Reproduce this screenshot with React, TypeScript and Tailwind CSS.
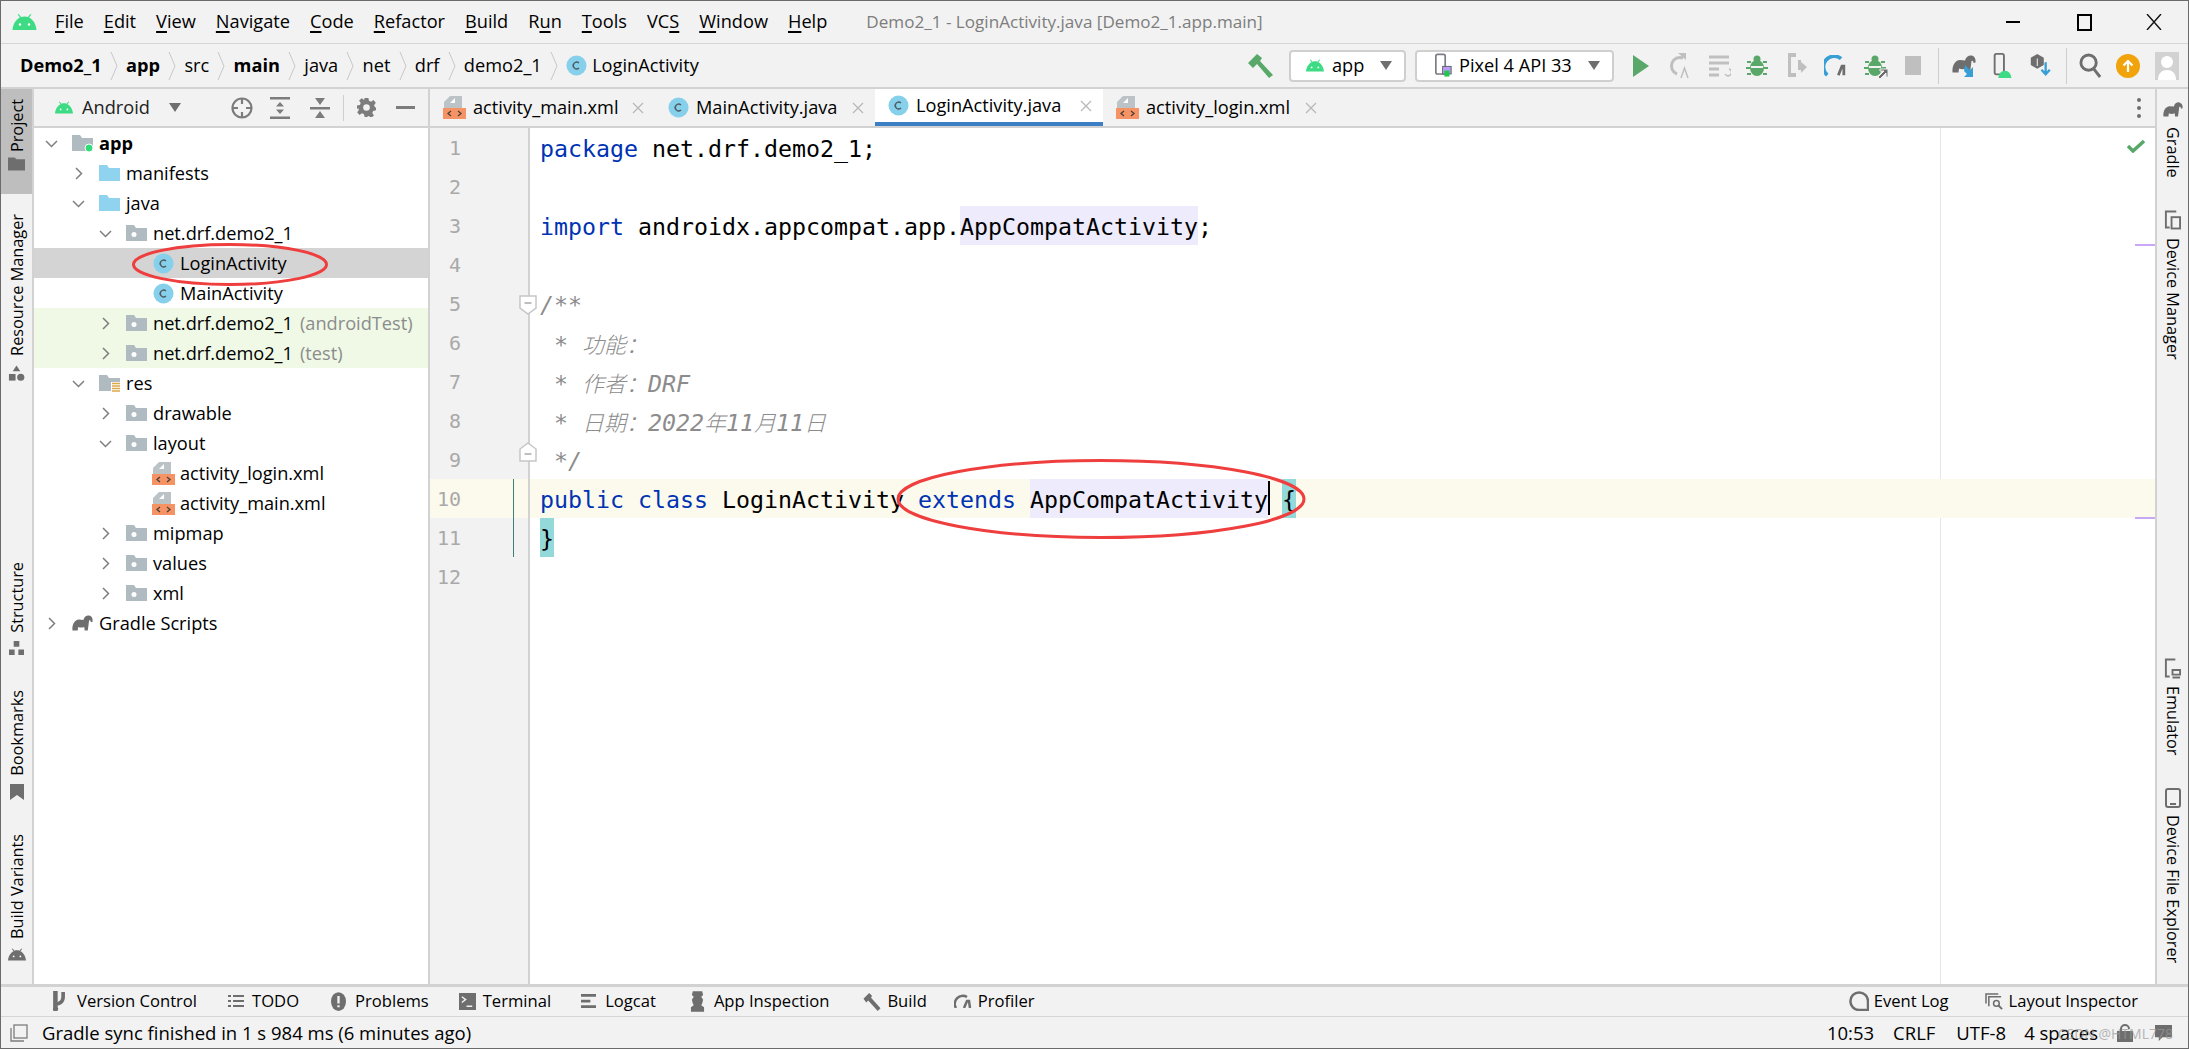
import React from "react";

type P = { className?: string };
const Android = ({ className = "w-[18px] h-[13px] text-[#3ddc84]" }: P) => (
  <svg viewBox="0 0 24 16" className={className} fill="currentColor">
    <path d="M0 16C0.6 9.5 4 5.2 7.4 3.6L5.2 0.6 6.2 0 8.6 3C11 2.2 13 2.2 15.4 3L17.8 0 18.8 0.6 16.6 3.6C20 5.2 23.4 9.5 24 16Z" />
    <circle cx="7.5" cy="10.5" r="1.2" fill="#fff" />
    <circle cx="16.5" cy="10.5" r="1.2" fill="#fff" />
  </svg>
);
const Elephant = ({ className = "w-[24px] h-[18px] text-[#6e6e6e]" }: P) => (
  <svg viewBox="0 0 24 18" className={className} fill="currentColor">
    <path d="M0.5 17.5C0 10 3 5.5 8 5L13 5.500C14 1.500 17 0 19.500 0.500 22.500 1 24 4 23.500 7.500L21.500 8C21.500 6 20.500 5.500 19.500 6 19 10 18.500 14 18 17.500H14.500L14 13.500C11.500 14.500 9 14.500 7 13.500L6.500 17.500Z" />
  </svg>
);
const Chevron = ({ open }: { open?: boolean }) => (
  <svg viewBox="0 0 13 13" className="w-[13px] h-[13px] text-[#7f7f7f]" fill="none" stroke="currentColor" strokeWidth="1.5">
    {open ? <path d="M1 4l5.5 5.5L12 4" /> : <path d="M4 1l5.5 5.5L4 12" />}
  </svg>
);
const Folder = ({ kind }: { kind: "blue" | "pkg" | "app" | "res" }) => {
  const color = kind === "blue" ? "#8fd3ee" : "#b0bbc1";
  return (
    <svg viewBox="0 0 21 18" className="w-[21px] h-[18px]">
      <path d="M0 1H8L10 4H21V17H0Z" fill={color} />
      {kind === "pkg" && <circle cx="8" cy="10.5" r="2.5" fill="#fff" />}
      {kind === "app" && <circle cx="17" cy="14" r="4" fill="#2fdc77" stroke="#fff" strokeWidth="1" />}
      {kind === "res" && (
        <g>
          <rect x="12" y="8" width="9" height="11" fill="#fff" />
          <path d="M13 9.5h8M13 12h8M13 14.5h8M13 17h8" stroke="#dba94a" strokeWidth="1.4" />
        </g>
      )}
    </svg>
  );
};
const ClassIcon = () => (
  <svg viewBox="0 0 22 22" className="w-[21px] h-[21px] shrink-0">
    <circle cx="11" cy="11" r="10.5" fill="#86d0ec" />
    <path d="M13.6 8.3A3.6 3.6 0 1 0 13.6 13.7" fill="none" stroke="#4e5a60" strokeWidth="1.5" />
  </svg>
);
const XmlIcon = () => (
  <svg viewBox="0 0 23 23" className="w-[23px] h-[23px] shrink-0">
    <path d="M7 0H19V12H1V6Z" fill="#bcc3c7" />
    <path d="M12 2V7H7Z" fill="#fff" />
    <rect x="0" y="12" width="23" height="11" fill="#f59365" />
    <path d="M8 15l-3 2.5 3 2.5M15 15l3 2.5-3 2.5" fill="none" stroke="#4a4038" strokeWidth="1.3" />
  </svg>
);

const Mn = ({ t, i }: { t: string; i: number }) => (
  <span>
    {t.slice(0, i)}
    <span className="underline decoration-[1.5px] underline-offset-[3px]">{t[i]}</span>
    {t.slice(i + 1)}
  </span>
);

const TitleBar = () => (
  <div className="h-[43px] shrink-0 flex items-center border-b border-[#d6d6d6] bg-[#f2f2f2] text-[18.2px] text-black">
    <div className="ml-[11px] w-[43px]">
      <Android className="w-[25px] h-[16px] text-[#3ddc84]" />
    </div>
    <div className="flex gap-[20px]">
      <Mn t="File" i={0} />
      <Mn t="Edit" i={0} />
      <Mn t="View" i={0} />
      <Mn t="Navigate" i={0} />
      <Mn t="Code" i={0} />
      <Mn t="Refactor" i={0} />
      <Mn t="Build" i={0} />
      <Mn t="Run" i={1} />
      <Mn t="Tools" i={0} />
      <Mn t="VCS" i={2} />
      <Mn t="Window" i={0} />
      <Mn t="Help" i={0} />
    </div>
    <span className="ml-[39px] text-[17.1px] text-[#7d7d7d]">Demo2_1 - LoginActivity.java [Demo2_1.app.main]</span>
    <div className="ml-auto flex items-center">
      <div className="w-[14px] h-[2px] bg-black mr-[57px]" />
      <div className="w-[15px] h-[17px] border-2 border-black mr-[54px]" />
      <svg viewBox="0 0 16 16" className="w-[16px] h-[16px] mr-[26px]" stroke="#111" strokeWidth="1.4">
        <path d="M1 0l14 16M15 0L1 16" />
      </svg>
    </div>
  </div>
);

const Sep = () => (
  <svg viewBox="0 0 8 30" className="w-[8px] h-[30px] mx-[8.2px] text-[#c8c8c8]" fill="none" stroke="currentColor">
    <path d="M1 1l6 14L1 29" />
  </svg>
);

const Combo = ({ className, children }: { className: string; children: React.ReactNode }) => (
  <div className={`h-[32px] rounded-[4px] border-2 border-[#cfcfcf] bg-white flex items-center ${className}`}>
    {children}
    <div className="ml-auto mr-[12px] w-0 h-0 border-x-[6px] border-x-transparent border-t-[9px] border-t-[#6e6e6e]" />
  </div>
);

const BugIcon = ({ withArrow }: { withArrow?: boolean }) => (
  <svg viewBox="0 0 24 24" className="w-[24px] h-[24px]" fill="#59a869">
    <ellipse cx="11" cy="14" rx="7" ry="8" />
    <circle cx="11" cy="5" r="3.5" />
    <path d="M1 7h4v2H1zM17 7h4v2h-4zM0 13h4v2H0zM18 13h4v2h-4zM1 19h4v2H1zM17 19h4v2h-4z" />
    <path d="M5 12h12v2H5z" fill="#f2f2f2" />
    {withArrow && <path d="M14 23l6-6h-4v-2h8v8h-2v-4l-6 6z" fill="#6e6e6e" stroke="#f2f2f2" />}
  </svg>
);

const NavBar = () => (
  <div className="h-[45px] shrink-0 flex items-center border-b-2 border-[#d2d2d2] bg-[#f2f2f2] text-[18.2px] text-black">
    <div className="flex items-center ml-[19px]">
      <span className="font-bold">Demo2_1</span>
      <Sep />
      <span className="font-bold">app</span>
      <Sep />
      <span>src</span>
      <Sep />
      <span className="font-bold">main</span>
      <Sep />
      <span>java</span>
      <Sep />
      <span>net</span>
      <Sep />
      <span>drf</span>
      <Sep />
      <span>demo2_1</span>
      <Sep />
      <ClassIcon />
      <span className="ml-[5px]">LoginActivity</span>
    </div>
    <div className="ml-auto mr-[9px] flex items-center">
      <svg viewBox="0 0 26 26" className="w-[26px] h-[26px]" fill="#59a869">
        <path d="M0 10L9 1 14 5 12 8 25 22 21 25 9 11 5 15Z" />
      </svg>
      <Combo className="w-[117px] ml-[15px] pl-[15px]">
        <Android />
        <span className="ml-[8px]">app</span>
      </Combo>
      <Combo className="w-[199px] ml-[9px] pl-[18px]">
        <svg viewBox="0 0 20 28" className="w-[17px] h-[25px]">
          <rect x="1" y="1" width="11" height="23" rx="2" fill="none" stroke="#7a7f85" strokeWidth="2" />
          <rect x="9" y="15" width="10" height="9" fill="#b99bf8" stroke="#555" />
          <rect x="11" y="20" width="6" height="7" fill="#1fc84a" />
        </svg>
        <span className="ml-[7px]">Pixel 4 API 33</span>
      </Combo>
      <svg viewBox="0 0 16 22" className="w-[16px] h-[22px] ml-[19px]" fill="#59a869"><path d="M0 0L16 11 0 22Z" /></svg>
      <svg viewBox="0 0 22 28" className="w-[22px] h-[28px] ml-[19px]" fill="none" stroke="#bfbfbf" strokeWidth="3">
        <path d="M15 6A8 8 0 1 0 9 22" /><path d="M10 1h8v7z" fill="#bfbfbf" stroke="none" /><path d="M13 26l3.5-10 3.5 10" strokeWidth="1.5" />
      </svg>
      <svg viewBox="0 0 22 24" className="w-[22px] h-[24px] ml-[19px]" fill="none" stroke="#bfbfbf" strokeWidth="3">
        <path d="M0 3h20M0 9h20M0 15h10M0 21h10" /><path d="M20 15a3.5 3.5 0 1 1-4 5" strokeWidth="1.6" />
      </svg>
      <div className="ml-[15px]"><BugIcon /></div>
      <svg viewBox="0 0 22 28" className="w-[22px] h-[28px] ml-[15px]" fill="#bfbfbf">
        <path d="M3 1h8v4H6v16h5v4H3zM13 8h3v2l6 5-6 6v-3h-3z" />
      </svg>
      <svg viewBox="0 0 26 24" className="w-[25px] h-[22px] ml-[17px]" fill="none" strokeWidth="4">
        <path d="M3 22A10.5 10.5 0 0 1 18 4" stroke="#389fd6" />
        <path d="M15 22l4-10 2 0 0 10" stroke="#6e6e6e" strokeWidth="3" />
      </svg>
      <div className="ml-[15px]"><BugIcon withArrow /></div>
      <div className="ml-[17px] w-[16px] h-[19px] bg-[#bfbfbf]" />
      <div className="ml-[17px] w-px h-[36px] bg-[#cfcfcf]" />
      <div className="relative ml-[13px] w-[26px] h-[26px]">
        <Elephant className="w-[24px] h-[18px] text-[#6e6e6e] mt-[2px]" />
        <svg viewBox="0 0 14 14" className="absolute right-0 bottom-0 w-[14px] h-[14px]"><path d="M1 0l5 5 3-3v10H0l3-3-3-3z" fill="#389fd6" /></svg>
      </div>
      <svg viewBox="0 0 20 28" className="w-[20px] h-[26px] ml-[15px]">
        <rect x="1" y="1" width="10" height="22" rx="2" fill="none" stroke="#6e6e6e" strokeWidth="2" />
        <path d="M5 27c.5-5 3-8 7-8s6.500 3 7 8z" fill="#3ddc84" />
      </svg>
      <svg viewBox="0 0 24 28" className="w-[24px] h-[26px] ml-[16px]">
        <path d="M8 1l7 4v8l-7 4-7-4V5z" fill="#6e6e6e" /><path d="M8 6v8" stroke="#fff" />
        <path d="M17 10v12M12.500 18l4.500 5 4.500-5" fill="none" stroke="#389fd6" strokeWidth="2.500" />
      </svg>
      <div className="ml-[13px] w-px h-[36px] bg-[#cfcfcf]" />
      <svg viewBox="0 0 24 26" className="w-[23px] h-[25px] ml-[12px]" fill="none" stroke="#6e6e6e" strokeWidth="3">
        <circle cx="10" cy="10" r="8" /><path d="M15 16l7 9" />
      </svg>
      <svg viewBox="0 0 24 24" className="w-[24px] h-[24px] ml-[14px]">
        <circle cx="12" cy="12" r="12" fill="#f0a30a" />
        <path d="M12 18V7M7.500 11.500L12 7l4.500 4.500" fill="none" stroke="#fff" strokeWidth="2.200" />
      </svg>
      <svg viewBox="0 0 24 28" className="w-[24px] h-[28px] ml-[15px]">
        <rect width="24" height="28" fill="#d2d2d2" />
        <circle cx="12" cy="10" r="6" fill="#fff" /><path d="M3 28c0-7 4-10 9-10s9 3 9 10z" fill="#fff" />
      </svg>
    </div>
  </div>
);

const VText = ({ children, className = "" }: { children: string; className?: string }) => (
  <span className={`[writing-mode:vertical-rl] rotate-180 whitespace-nowrap text-[16.3px] leading-[22px] text-black ${className}`}>{children}</span>
);
const RText = ({ children, className = "" }: { children: string; className?: string }) => (
  <span className={`[writing-mode:vertical-rl] whitespace-nowrap text-[16.3px] leading-[22px] text-black ${className}`}>{children}</span>
);

const LeftStripe = () => (
  <div className="w-[33px] shrink-0 flex flex-col items-center border-r-2 border-[#d2d2d2] bg-[#f2f2f2]">
    <div className="w-full h-[105px] bg-[#bebebe] flex flex-col items-center pt-[10px]">
      <VText>Project</VText>
      <svg viewBox="0 0 18 14" className="w-[17px] h-[14px] mt-[5px]" fill="#6e6e6e"><path d="M0 0H7L9 2H18V14H0Z" /></svg>
    </div>
    <VText className="mt-[20px]">Resource Manager</VText>
    <svg viewBox="0 0 18 17" className="w-[17px] h-[17px] mt-[9px]" fill="#6e6e6e">
      <path d="M9 0l4 6H5z" /><rect x="1" y="9" width="7" height="7" /><circle cx="13.500" cy="12.500" r="3.800" />
    </svg>
    <VText className="mt-[180px]">Structure</VText>
    <svg viewBox="0 0 18 16" className="w-[17px] h-[15px] mt-[8px]" fill="#6e6e6e"><path d="M6 0h6v6H6zM1 9h6v6H1zM11 9h6v6h-6z" /></svg>
    <VText className="mt-[34px]">Bookmarks</VText>
    <svg viewBox="0 0 14 16" className="w-[14px] h-[16px] mt-[9px]" fill="#6e6e6e"><path d="M0 0H14V16L7 11 0 16Z" /></svg>
    <VText className="mt-[34px]">Build Variants</VText>
    <Android className="w-[18px] h-[13px] text-[#6e6e6e] mt-[9px]" />
  </div>
);

const RightStripe = () => (
  <div className="w-[33px] shrink-0 flex flex-col items-center border-l-2 border-[#d2d2d2] bg-[#f2f2f2] pt-[13px]">
    <Elephant className="w-[20px] h-[15px] text-[#6e6e6e]" />
    <RText className="mt-[10px]">Gradle</RText>
    <svg viewBox="0 0 18 20" className="w-[17px] h-[20px] mt-[32px]" fill="none" stroke="#6e6e6e" strokeWidth="2"><path d="M13 1H2v17h4" /><rect x="8" y="7" width="9" height="12" /></svg>
    <RText className="mt-[8px]">Device Manager</RText>
    <svg viewBox="0 0 18 22" className="w-[17px] h-[22px] mt-[298px]" fill="none" stroke="#6e6e6e" strokeWidth="2"><path d="M12 1H2v18h4" /><path d="M9 12h8v5H9zM9 20h8" /></svg>
    <RText className="mt-[6px]">Emulator</RText>
    <svg viewBox="0 0 16 20" className="w-[16px] h-[20px] mt-[33px]" fill="none" stroke="#6e6e6e" strokeWidth="2"><rect x="1" y="1" width="14" height="18" rx="2" /><path d="M5 16h6" /></svg>
    <RText className="mt-[7px]">Device File Explorer</RText>
  </div>
);

type Row = {
  d: 0 | 1 | 2 | 3;
  ch?: "open" | "closed";
  icon: React.ReactNode;
  label: string;
  suffix?: string;
  bold?: boolean;
  bg?: string;
};
const depthClass = ["pl-[11px]", "pl-[38px]", "pl-[65px]", "pl-[92px]"];
const rows: Row[] = [
  { d: 0, ch: "open", icon: <Folder kind="app" />, label: "app", bold: true },
  { d: 1, ch: "closed", icon: <Folder kind="blue" />, label: "manifests" },
  { d: 1, ch: "open", icon: <Folder kind="blue" />, label: "java" },
  { d: 2, ch: "open", icon: <Folder kind="pkg" />, label: "net.drf.demo2_1" },
  { d: 3, icon: <ClassIcon />, label: "LoginActivity", bg: "bg-[#d4d4d4]" },
  { d: 3, icon: <ClassIcon />, label: "MainActivity" },
  { d: 2, ch: "closed", icon: <Folder kind="pkg" />, label: "net.drf.demo2_1", suffix: "(androidTest)", bg: "bg-[#eff9e6]" },
  { d: 2, ch: "closed", icon: <Folder kind="pkg" />, label: "net.drf.demo2_1", suffix: "(test)", bg: "bg-[#eff9e6]" },
  { d: 1, ch: "open", icon: <Folder kind="res" />, label: "res" },
  { d: 2, ch: "closed", icon: <Folder kind="pkg" />, label: "drawable" },
  { d: 2, ch: "open", icon: <Folder kind="pkg" />, label: "layout" },
  { d: 3, icon: <XmlIcon />, label: "activity_login.xml" },
  { d: 3, icon: <XmlIcon />, label: "activity_main.xml" },
  { d: 2, ch: "closed", icon: <Folder kind="pkg" />, label: "mipmap" },
  { d: 2, ch: "closed", icon: <Folder kind="pkg" />, label: "values" },
  { d: 2, ch: "closed", icon: <Folder kind="pkg" />, label: "xml" },
  { d: 0, ch: "closed", icon: <Elephant className="w-[22px] h-[16px] text-[#6e6e6e]" />, label: "Gradle Scripts" },
];

const Panel = () => (
  <div className="w-[396px] shrink-0 flex flex-col border-r-2 border-[#d2d2d2] bg-white">
    <div className="h-[39px] shrink-0 flex items-center bg-[#f2f2f2] border-b-2 border-[#d2d2d2] text-[18.2px] pl-[21px]">
      <Android className="w-[18px] h-[13px] text-[#3ddc84]" />
      <span className="ml-[9px] text-[#222]">Android</span>
      <div className="ml-[19px] w-0 h-0 border-x-[6px] border-x-transparent border-t-[9px] border-t-[#6e6e6e]" />
      <svg viewBox="0 0 22 22" className="w-[22px] h-[22px] ml-[50px]" fill="none" stroke="#7c7c7c" strokeWidth="2.200">
        <circle cx="11" cy="11" r="9.500" /><path d="M11 1v6M11 15v6M1 11h6M15 11h6" />
      </svg>
      <svg viewBox="0 0 20 22" className="w-[20px] h-[22px] ml-[17px]" fill="#7c7c7c">
        <path d="M0 0h20v2.500H0zM0 19.500h20V22H0zM10 5l4 4.500H6zM10 17l-4-4.500h8z" />
      </svg>
      <svg viewBox="0 0 20 22" className="w-[20px] h-[22px] ml-[20px]" fill="#7c7c7c">
        <path d="M0 10h20v2.500H0zM10 8L5 1h10zM10 14l5 7H5z" />
      </svg>
      <div className="ml-[13px] w-px h-[26px] bg-[#cfcfcf]" />
      <svg viewBox="0 0 20 20" className="w-[19px] h-[19px] ml-[13px]" fill="#7c7c7c">
        <path fillRule="evenodd" d="M8 0h4l.6 3 2.200.9 2.600-1.700 2.400 2.800-1.800 2.500.9 2.300 1.100.2v3l-3 .6-.9 2.200 1.700 2.600-2.800 2.400-2.500-1.800-2.300.9L12 20H8l-.6-3-2.200-.9-2.600 1.700-2.400-2.800 1.800-2.500L1.100 10.200 0 12V8l3-.6.900-2.200L2.200 2.600 5 .2l2.500 1.800z M10 6.500a3.500 3.500 0 1 0 0 7 3.500 3.500 0 0 0 0-7z" />
      </svg>
      <div className="ml-[20px] w-[19px] h-[3px] bg-[#7c7c7c]" />
    </div>
    <div className="flex flex-col text-[18.2px] leading-[30px]">
      {rows.map((r, i) => (
        <div key={i} className={`h-[30px] flex items-center ${depthClass[r.d]} ${r.bg ?? ""}`}>
          <div className="w-[13px] mr-[14px] flex items-center">{r.ch && <Chevron open={r.ch === "open"} />}</div>
          <div className="w-[21px] flex items-center justify-center">{r.icon}</div>
          <span className={`ml-[6px] text-black ${r.bold ? "font-bold" : ""}`}>{r.label}</span>
          {r.suffix && <span className="ml-[7px] text-[#8c8c8c]">{r.suffix}</span>}
        </div>
      ))}
    </div>
  </div>
);

const Tab = ({ w, icon, label, active }: { w: string; icon: React.ReactNode; label: string; active?: boolean }) => (
  <div className={`h-full flex items-center pl-[13px] ${w} ${active ? "bg-white border-b-[4px] border-[#3d7fc4]" : ""}`}>
    {icon}
    <span className="ml-[7px] text-black">{label}</span>
    <svg viewBox="0 0 12 12" className="ml-auto mr-[11px] w-[12px] h-[12px]" stroke="#b8b8b8" strokeWidth="1.300"><path d="M1 1l10 10M11 1L1 11" /></svg>
  </div>
);

const TabBar = () => (
  <div className="h-[39px] shrink-0 flex items-center bg-[#f2f2f2] border-b-2 border-[#d2d2d2] text-[18.2px]">
    <Tab w="w-[225px]" icon={<XmlIcon />} label="activity_main.xml" />
    <Tab w="w-[220px]" icon={<ClassIcon />} label="MainActivity.java" />
    <Tab w="w-[228px]" icon={<ClassIcon />} label="LoginActivity.java" active />
    <Tab w="w-[225px]" icon={<XmlIcon />} label="activity_login.xml" />
    <div className="ml-auto mr-[14px] flex flex-col gap-[4px]">
      <div className="w-[4px] h-[4px] rounded-full bg-[#6e6e6e]" />
      <div className="w-[4px] h-[4px] rounded-full bg-[#6e6e6e]" />
      <div className="w-[4px] h-[4px] rounded-full bg-[#6e6e6e]" />
    </div>
  </div>
);

const Kw = ({ children }: { children: string }) => <span className="text-[#0033b3]">{children}</span>;
const Sel = ({ children }: { children: string }) => <span className="bg-[#edebfc] inline-block h-[39px]">{children}</span>;
const Cj = ({ children }: { children: string }) => (
  <span className="font-['Noto_Sans_CJK_SC'] text-[22px] font-light">{children}</span>
);
const Cm = ({ children }: { children: React.ReactNode }) => <span className="italic text-[#8c8c8c]">{children}</span>;

const lines: React.ReactNode[] = [
  <><Kw>package</Kw> net.drf.demo2_1;</>,
  null,
  <><Kw>import</Kw> androidx.appcompat.app.<Sel>AppCompatActivity</Sel>;</>,
  null,
  <Cm>/**</Cm>,
  <Cm>{" * "}<Cj>功能：</Cj></Cm>,
  <Cm>{" * "}<Cj>作者：</Cj>DRF</Cm>,
  <Cm>{" * "}<Cj>日期：</Cj>2022<Cj>年</Cj>11<Cj>月</Cj>11<Cj>日</Cj></Cm>,
  <Cm>{" */"}</Cm>,
  <>
    <Kw>public</Kw> <Kw>class</Kw> LoginActivity <Kw>extends</Kw> <Sel>AppCompatActivity</Sel>
    <span className="relative inline-block align-top w-0 h-[39px]"><span className="absolute left-0 top-[2px] w-[2px] h-[34px] bg-black" /></span>
    {" "}<span className="bg-[#93d9d9] inline-block h-[39px]">{"{"}</span>
  </>,
  <span className="bg-[#93d9d9] inline-block h-[39px]">{"}"}</span>,
  null,
];

const Fold = ({ up, className }: { up?: boolean; className: string }) => (
  <svg viewBox="0 0 18 20" className={`absolute w-[18px] h-[20px] ${className}`} fill="#fff" stroke="#c6c6c6" strokeWidth="1.500">
    {up ? <path d="M1 19V7L9 1l8 6v12z" /> : <path d="M1 1h16v12l-8 6-8-6z" />}
    <path d={up ? "M5.500 12h7" : "M5.500 8h7"} stroke="#aaa" />
  </svg>
);

const Editor = () => (
  <div className="flex-1 min-w-0 flex flex-col bg-white">
    <TabBar />
    <div className="relative flex-1 flex flex-col font-['DejaVu_Sans_Mono'] text-[23.25px] leading-[41px] text-black">
      <div className="absolute top-0 bottom-0 left-[1510px] w-px bg-[#e6e6e6]" />
      {lines.map((l, i) => (
        <div key={i} className={`relative h-[39px] flex ${i === 9 ? "bg-[#fcfaed]" : ""}`}>
          <div className={`relative w-[100px] shrink-0 border-r-2 border-[#d2d2d2] text-right pr-[67px] text-[20px] text-[#a9a9a9] ${i === 9 ? "" : "bg-[#f2f2f2]"}`}>
            {i + 1}
            {(i === 9 || i === 10) && <div className="absolute left-[83px] top-0 bottom-0 w-px bg-[#3f7f78]" />}
            {i === 4 && <Fold className="left-[89px] top-[11px]" />}
            {i === 8 && <Fold up className="left-[89px] top-[2px]" />}
          </div>
          <div className="pl-[10px] whitespace-pre h-[39px]">{l}</div>
        </div>
      ))}
      <div className="flex-1 flex">
        <div className="w-[100px] border-r-2 border-[#d2d2d2] bg-[#f2f2f2]" />
      </div>
      <svg viewBox="0 0 18 14" className="absolute right-[10px] top-[11px] w-[18px] h-[14px]" fill="none" stroke="#59a869" strokeWidth="3.500"><path d="M1 7l5 5L17 2" /></svg>
      <div className="absolute right-0 top-[116px] w-[20px] h-[2px] bg-[#c9a7f5]" />
      <div className="absolute right-0 top-[389px] w-[20px] h-[2px] bg-[#c9a7f5]" />
    </div>
  </div>
);

const BBtn = ({ icon, label, className = "" }: { icon: React.ReactNode; label: string; className?: string }) => (
  <div className={`flex items-center ${className}`}>
    <div className="w-[24px] flex items-center">{icon}</div>
    <span>{label}</span>
  </div>
);

const BottomBar = () => (
  <div className="h-[33px] shrink-0 flex items-center bg-[#f2f2f2] border-t-[3px] border-[#d2d2d2] border-b border-b-[#d6d6d6] text-[16.6px] text-black pl-[52px]">
    <BBtn label="Version Control" icon={
      <svg viewBox="0 0 14 22" className="w-[13px] h-[20px]" fill="#6e6e6e"><path d="M0 0h5v12C8 11 9 9 9 6V1h4v5c0 6-3 9-8 10v2a3 3 0 1 1-5 0z" /></svg>
    } />
    <BBtn className="ml-[31px]" label="TODO" icon={
      <svg viewBox="0 0 16 14" className="w-[16px] h-[14px]" fill="#6e6e6e"><path d="M0 1h3v2H0zM5 1h11v2H5zM0 6h3v2H0zM5 6h11v2H5zM0 11h3v2H0zM5 11h11v2H5z" /></svg>
    } />
    <BBtn className="ml-[32px]" label="Problems" icon={
      <svg viewBox="0 0 16 20" className="w-[15px] h-[19px]"><ellipse cx="8" cy="10" rx="8" ry="10" fill="#6e6e6e" /><path d="M8 4v8M8 14v2" stroke="#f2f2f2" strokeWidth="2.500" /></svg>
    } />
    <BBtn className="ml-[30px]" label="Terminal" icon={
      <svg viewBox="0 0 18 18" className="w-[17px] h-[17px]"><rect width="18" height="18" fill="#6e6e6e" /><path d="M3 4l4 3-4 3M8 14h6" fill="none" stroke="#f2f2f2" strokeWidth="1.500" /></svg>
    } />
    <BBtn className="ml-[30px]" label="Logcat" icon={
      <svg viewBox="0 0 16 18" className="w-[15px] h-[17px]" fill="#6e6e6e"><path d="M0 1h16v3H0zM0 7h10v3H0zM0 13h16v3H0z" /></svg>
    } />
    <BBtn className="ml-[34px]" label="App Inspection" icon={
      <svg viewBox="0 0 16 22" className="w-[15px] h-[21px]" fill="#6e6e6e"><path d="M3 0h10l1 4-2 2 2 3-1 4-1 2 3 2v5H1v-5l3-2-1-2-1-4 2-3-2-2z" /></svg>
    } />
    <BBtn className="ml-[34px]" label="Build" icon={
      <svg viewBox="0 0 18 20" className="w-[18px] h-[19px]" fill="#6e6e6e"><path d="M0 7L6 1l3 3-1 2 10 11-3 3L5 9l-2 2z" /></svg>
    } />
    <BBtn className="ml-[27px]" label="Profiler" icon={
      <svg viewBox="0 0 18 14" className="w-[18px] h-[14px]" fill="none" stroke="#6e6e6e" strokeWidth="2.500"><path d="M2 14A8 8 0 0 1 13 3" /><path d="M10 14l3-7 2 0 1 7" /></svg>
    } />
    <div className="ml-auto flex items-center mr-[50px]">
      <BBtn label="Event Log" icon={
        <svg viewBox="0 0 20 20" className="w-[20px] h-[20px] -ml-[1px]" fill="none" stroke="#6e6e6e" strokeWidth="2.500"><path d="M19 19H10A8.800 8.800 0 1 1 19 10z" /></svg>
      } className="mr-[36px]" />
      <BBtn label="Layout Inspector" icon={
        <svg viewBox="0 0 20 18" className="w-[19px] h-[17px]" fill="none" stroke="#6e6e6e" strokeWidth="1.600"><path d="M1 11V1h13M4 14V4h13" /><circle cx="12" cy="11" r="3" /><path d="M14 13l4 4" strokeWidth="2" /></svg>
      } />
    </div>
  </div>
);

const StatusBar = () => (
  <div className="flex-1 flex items-center bg-[#f2f2f2] text-[18.5px] text-black relative">
    <svg viewBox="0 0 18 18" className="w-[18px] h-[18px] ml-[9px]" fill="none" stroke="#7c7c7c" strokeWidth="1.300"><path d="M1 4v13h13" /><rect x="4" y="1" width="13" height="13" /></svg>
    <span className="ml-[14px]">Gradle sync finished in 1 s 984 ms (6 minutes ago)</span>
    <div className="ml-auto flex items-center">
      <span>10:53</span>
      <span className="ml-[19px]">CRLF</span>
      <span className="ml-[21px]">UTF-8</span>
      <span className="ml-[18px]">4 spaces</span>
      <svg viewBox="0 0 16 18" className="w-[16px] h-[18px] ml-[19px]" fill="none" stroke="#6e6e6e" strokeWidth="2"><path d="M4 8V5a4 4 0 0 1 8 0" /><rect x="1" y="8" width="14" height="9" fill="#6e6e6e" /></svg>
      <svg viewBox="0 0 18 18" className="w-[17px] h-[17px] ml-[22px] mr-[16px]" fill="#6e6e6e"><path d="M0 1h18v13H8l-4 4v-4H0z" /></svg>
    </div>
    <span className="absolute right-[15px] top-[6px] text-[14px] text-[#9a9a9a] opacity-70">CSDN @HTML778</span>
  </div>
);

export default function App() {
  return (
    <div className="relative w-[2189px] h-[1049px] flex flex-col bg-[#f2f2f2] border border-[#6b6b6b] overflow-hidden font-['Open_Sans',sans-serif]">
      <TitleBar />
      <NavBar />
      <div className="h-[895px] shrink-0 flex">
        <LeftStripe />
        <Panel />
        <Editor />
        <RightStripe />
      </div>
      <BottomBar />
      <StatusBar />
      <svg viewBox="0 0 2189 1049" className="absolute left-[-1px] top-[-1px] w-[2189px] h-[1049px] pointer-events-none" fill="none" stroke="#ef3e3e" strokeWidth="3">
        <ellipse cx="230" cy="264.500" rx="96.500" ry="20" />
        <ellipse cx="1101" cy="499" rx="203" ry="38.500" />
      </svg>
    </div>
  );
}
